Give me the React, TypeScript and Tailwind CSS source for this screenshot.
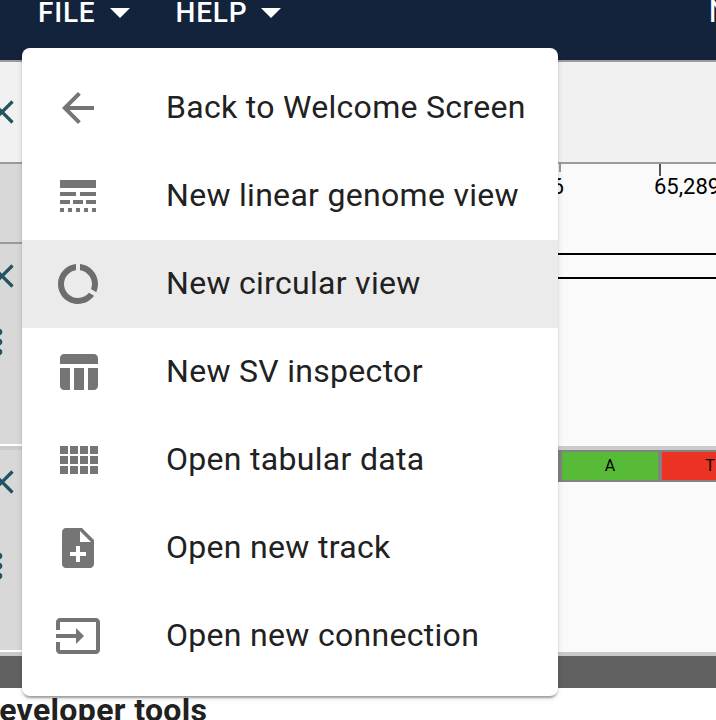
import React from "react";

const icons = {
  back: "M20 11H7.83l5.59-5.59L12 4l-8 8 8 8 1.41-1.41L7.83 13H20v-2z",
  lineStyle:
    "M3 16h5v-2H3v2zm6.5 0h5v-2h-5v2zm6.5 0h5v-2h-5v2zM3 20h2v-2H3v2zm4 0h2v-2H7v2zm4 0h2v-2h-2v2zm4 0h2v-2h-2v2zm4 0h2v-2h-2v2zM3 12h8v-2H3v2zm10 0h8v-2h-8v2zM3 4v4h18V4H3z",
  dataUsage:
    "M13 2.05v3.03c3.39.49 6 3.39 6 6.92 0 .9-.18 1.75-.48 2.54l2.6 1.53c.56-1.24.88-2.62.88-4.07 0-5.18-3.95-9.45-9-9.95zM12 19c-3.87 0-7-3.13-7-7 0-3.53 2.61-6.43 6-6.92V2.05c-5.06.5-9 4.76-9 9.95 0 5.52 4.47 10 9.99 10 3.31 0 6.24-1.61 8.06-4.09l-2.6-1.53C16.17 17.98 14.21 19 12 19z",
  tableChart:
    "M10 10.02h5V21h-5zM17 21h3c1.1 0 2-.9 2-2v-9h-5v11zm3-18H5c-1.1 0-2 .9-2 2v3h19V5c0-1.1-.9-2-2-2zM3 19c0 1.1.9 2 2 2h3V10H3v9z",
  viewComfy:
    "M3 9h4V5H3v4zm0 5h4v-4H3v4zm5 0h4v-4H8v4zm5 0h4v-4h-4v4zM8 9h4V5H8v4zm5-4v4h4V5h-4zm5 9h4v-4h-4v4zM3 19h4v-4H3v4zm5 0h4v-4H8v4zm5 0h4v-4h-4v4zm5 0h4v-4h-4v4zm0-14v4h4V5h-4z",
  noteAdd:
    "M14 2H6c-1.1 0-1.99.9-1.99 2L4 20c0 1.1.89 2 1.99 2H18c1.1 0 2-.9 2-2V8l-6-6zm2 14h-3v3h-2v-3H8v-2h3v-3h2v3h3v2zm-3-7V3.5L18.5 9H13z",
  input:
    "M21 3.01H3c-1.1 0-2 .9-2 2V9h2V4.99h18v14.03H3V15H1v4.01c0 1.1.9 1.98 2 1.98h18c1.1 0 2-.88 2-1.98v-14c0-1.11-.9-2-2-2zM11 16l4-4-4-4v3H1v2h10v3z",
  close:
    "M19 6.41L17.59 5 12 10.59 6.41 5 5 6.41 10.59 12 5 17.59 6.41 19 12 13.41 17.59 19 19 17.59 13.41 12z",
  more: "M12 8c1.1 0 2-.9 2-2s-.9-2-2-2-2 .9-2 2 .9 2 2 2zm0 2c-1.1 0-2 .9-2 2s.9 2 2 2 2-.9 2-2-.9-2-2-2zm0 6c-1.1 0-2 .9-2 2s.9 2 2 2 2-.9 2-2-.9-2-2-2z",
  dropDown: "M7 10l5 5 5-5z",
};

function Icon({ name, className }: { name: keyof typeof icons; className: string }) {
  return (
    <svg viewBox="0 0 24 24" fill="currentColor" className={`block shrink-0 ${className}`}>
      <path d={icons[name]} />
    </svg>
  );
}

const items: { icon: keyof typeof icons; label: string; active?: boolean }[] = [
  { icon: "back", label: "Back to Welcome Screen" },
  { icon: "lineStyle", label: "New linear genome view" },
  { icon: "dataUsage", label: "New circular view", active: true },
  { icon: "tableChart", label: "New SV inspector" },
  { icon: "viewComfy", label: "Open tabular data" },
  { icon: "noteAdd", label: "Open new track" },
  { icon: "input", label: "Open new connection" },
];

function MenuButton({ label, className }: { label: string; className: string }) {
  return (
    <button className={`flex h-6 shrink-0 items-center text-[28px] font-medium leading-6 tracking-[0.8px] ${className}`}>
      <span className="pt-0.5">{label}</span>
      <Icon name="dropDown" className="size-12" />
    </button>
  );
}

function TrackControls({ className }: { className: string }) {
  return (
    <div className={`w-[460px] shrink-0 bg-[#d8d8d8] text-[#215462] ${className}`}>
      <Icon name="close" className="-ml-[18px] size-10" />
      <Icon name="more" className="-ml-[21px] size-10" />
    </div>
  );
}

export default function App() {
  return (
    <div className="relative h-[720px] w-[716px] overflow-hidden bg-white font-['Roboto',sans-serif]">
      <header className="flex h-[60px] bg-[#13233c] text-white">
        <MenuButton label="FILE" className="ml-[38px] w-[137.5px]" />
        <MenuButton label="HELP" className="w-[533px]" />
        <span className="shrink-0 text-[32px] leading-[22px]">New session</span>
      </header>

      <section className="h-[104px] border-y-2 border-[#9c9a9c] bg-[#f1f1f1] pt-[30px] text-[#215462]">
        <Icon name="close" className="-ml-[18px] size-10" />
      </section>

      <section className="flex h-[282px]">
        <div className="flex w-[460px] shrink-0 flex-col">
          <div className="h-20 border-b-2 border-[#9c9a9c] bg-[#d8d8d8]" />
          <TrackControls className="h-[200px] flex flex-col gap-[26px] pt-3" />
          <div className="h-0.5 bg-white" />
        </div>
        <div className="flex-1 bg-[#fafafa]">
          <div className="flex h-3">
            <div className="ml-[99px] h-2 w-0.5 bg-[#999]" />
            <div className="ml-[98px] h-3 w-0.5 bg-[#555]" />
          </div>
          <div className="flex h-[77px] text-[22px] leading-[22px] text-black">
            <span className="flex w-[104px] shrink-0 justify-end">66</span>
            <span className="ml-[90px] shrink-0">65,289,070</span>
          </div>
          <div className="-mr-2 h-[26px] border-y-2 border-black" />
        </div>
      </section>

      <div className="h-1 bg-[#cacaca]" />

      <section className="flex h-[202px]">
        <div className="flex w-[460px] shrink-0 flex-col">
          <TrackControls className="h-[200px] flex flex-col gap-11 pt-3" />
          <div className="h-0.5 bg-white" />
        </div>
        <div className="flex-1 bg-[#fafafa]">
          <div className="flex h-8 overflow-hidden text-center text-[16px] leading-[27px] text-black">
            <div className="w-[100px] shrink-0 border-2 border-[#828282] bg-[#4f7fff]" />
            <div className="w-[100px] shrink-0 border-2 border-[#828282] bg-[#57bb37]">A</div>
            <div className="w-[100px] shrink-0 border-2 border-[#828282] bg-[#ea3323]">T</div>
          </div>
        </div>
      </section>

      <div className="h-1 bg-[#cacaca]" />
      <div className="h-8 bg-[#616161]" />
      <h2 className="-ml-[22px] pt-[3px] text-[32px] font-bold leading-[38px] tracking-[0.35px] text-[#212121]">Developer tools</h2>

      {/* File menu */}
      <ul className="absolute left-[22px] top-12 w-[536px] rounded-lg bg-white py-4 shadow-[0_4px_2px_-2px_rgba(0,0,0,0.2),0_2px_2px_0_rgba(0,0,0,0.14),0_2px_6px_0_rgba(0,0,0,0.12)]">
        {items.map((item) => (
          <li key={item.label} className={`flex h-[88px] items-center gap-16 pl-8 ${item.active ? "bg-[#ebebeb]" : ""}`}>
            <Icon name={item.icon} className={`size-12 ${item.active ? "text-[#6d6d6d]" : "text-[#757575]"}`} />
            <span className="whitespace-nowrap pb-0.5 text-[32px] leading-[48px] tracking-[0.3px] text-[#212121]">{item.label}</span>
          </li>
        ))}
      </ul>
    </div>
  );
}
